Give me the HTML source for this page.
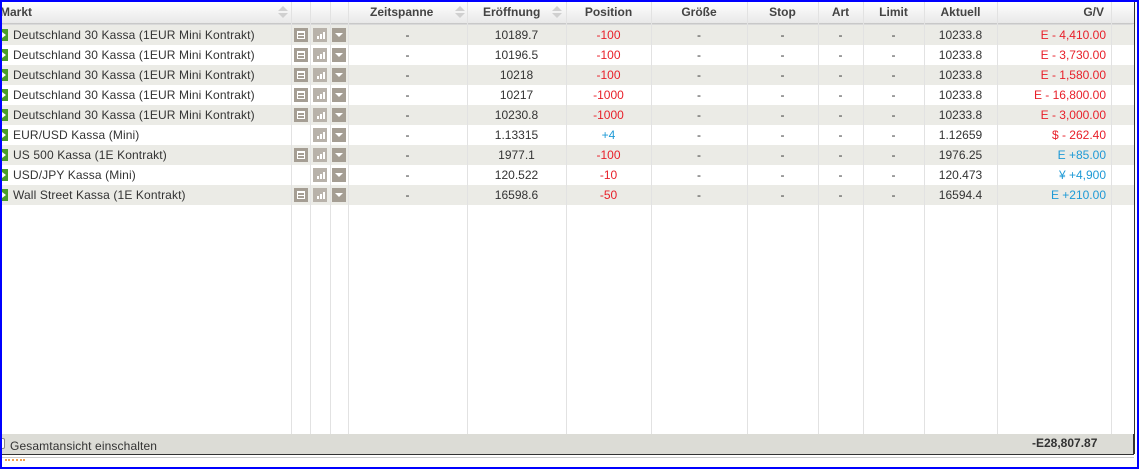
<!DOCTYPE html><html><head><meta charset="utf-8"><style>
*{margin:0;padding:0;box-sizing:border-box}
body{width:1139px;height:469px;overflow:hidden;background:#fff;font-family:"Liberation Sans",Arial,sans-serif;font-size:12px;color:#333;position:relative}
.frame{position:absolute;left:0;top:0;width:1139px;height:469px;border:2px solid #0000ff}
.hdr{position:absolute;left:0;top:2px;width:1134px;height:22px;background:linear-gradient(#fff,#e8e8e8);border-bottom:1px solid #c8c8c8;box-shadow:0 2px 3px rgba(0,0,0,.18)}
.vl{position:absolute;top:2px;height:432px;width:1px;background:#e2e2e2}
.row{position:absolute;left:0;width:1134px;height:20px}
.c{position:absolute;top:0;height:20px;line-height:20px;white-space:nowrap}
.h{position:absolute;top:2px;height:22px;line-height:20px;font-weight:bold;color:#444;white-space:nowrap}
.r{color:#e8202a}.b{color:#1e9ad6}
.flag{position:absolute;left:0;top:4px;width:8px;height:12px;background:#4a9e2a}
.flag:after{content:"";position:absolute;left:2px;top:3px;border-left:4px solid #fff;border-top:3px solid transparent;border-bottom:3px solid transparent}
.ic{position:absolute;top:3px;width:14px;height:14px;background:#a59e94}
.sort{position:absolute;top:6px;width:0;height:0}
.sort:before{content:"";position:absolute;left:0;top:0;border-left:5px solid transparent;border-right:5px solid transparent;border-bottom:5px solid #d0d0d0}
.sort:after{content:"";position:absolute;left:0;top:7px;border-left:5px solid transparent;border-right:5px solid transparent;border-top:5px solid #d0d0d0}
.m{letter-spacing:.12px}
</style></head><body>
<div class="hdr"></div>
<div class="h" style="left:0">Markt</div>
<div class="sort" style="left:278px"></div>
<div class="h" style="left:370px">Zeitspanne</div><div class="sort" style="left:455px"></div>
<div class="h" style="left:483px">Eröffnung</div><div class="sort" style="left:552px"></div>
<div class="h" style="left:566px;width:85px;text-align:center">Position</div>
<div class="h" style="left:651px;width:96px;text-align:center">Größe</div>
<div class="h" style="left:747px;width:71px;text-align:center">Stop</div>
<div class="h" style="left:818px;width:45px;text-align:center">Art</div>
<div class="h" style="left:863px;width:61px;text-align:center">Limit</div>
<div class="h" style="left:924px;width:73px;text-align:center">Aktuell</div>
<div class="h" style="left:997px;width:107px;text-align:right">G/V</div>
<div id="rows"></div>
<div class="vl" style="left:291px"></div><div class="vl" style="left:310px"></div><div class="vl" style="left:330px"></div><div class="vl" style="left:348px"></div><div class="vl" style="left:467px"></div><div class="vl" style="left:566px"></div><div class="vl" style="left:651px"></div><div class="vl" style="left:747px"></div><div class="vl" style="left:818px"></div><div class="vl" style="left:863px"></div><div class="vl" style="left:924px"></div><div class="vl" style="left:997px"></div><div class="vl" style="left:1111px"></div>
<div style="position:absolute;left:0;top:434px;width:1134px;height:21px;background:#dcdcd6;border-bottom:1px solid #333;border-right:1px solid #333"></div>
<div style="position:absolute;left:-6px;top:438px;width:11px;height:11px;border:1px solid #888;background:#fff;border-radius:2px"></div>
<div class="m" style="position:absolute;left:10px;top:435px;height:21px;line-height:23px;font-size:12px;color:#333">Gesamtansicht einschalten</div>
<div style="position:absolute;left:1032px;top:433px;height:21px;line-height:20px;font-weight:bold;color:#333">-E28,807.87</div>
<div style="position:absolute;left:1134px;top:2px;width:1px;height:452px;background:#333"></div>
<div style="position:absolute;left:0;top:457px;width:1134px;height:1px;background:#ccc"></div>
<div style="position:absolute;left:5px;top:459px;width:20px;height:3px;border-top:2px dotted #f0a050"></div>
<div class="frame"></div>
<script>
var d=[["Deutschland 30 Kassa (1EUR Mini Kontrakt)",1,"10189.7","-100","r","10233.8","E - 4,410.00","r"],
["Deutschland 30 Kassa (1EUR Mini Kontrakt)",1,"10196.5","-100","r","10233.8","E - 3,730.00","r"],
["Deutschland 30 Kassa (1EUR Mini Kontrakt)",1,"10218","-100","r","10233.8","E - 1,580.00","r"],
["Deutschland 30 Kassa (1EUR Mini Kontrakt)",1,"10217","-1000","r","10233.8","E - 16,800.00","r"],
["Deutschland 30 Kassa (1EUR Mini Kontrakt)",1,"10230.8","-1000","r","10233.8","E - 3,000.00","r"],
["EUR/USD Kassa (Mini)",0,"1.13315","+4","b","1.12659","$ - 262.40","r"],
["US 500 Kassa (1E Kontrakt)",1,"1977.1","-100","r","1976.25","E +85.00","b"],
["USD/JPY Kassa (Mini)",0,"120.522","-10","r","120.473","¥ +4,900","b"],
["Wall Street Kassa (1E Kontrakt)",1,"16598.6","-50","r","16594.4","E +210.00","b"]];
var h="";d.forEach(function(r,i){var t=25+i*20;
h+='<div class="row" style="top:'+t+'px;background:'+(i%2==0?'#ebebe6':'#fff')+'">'+
'<div class="flag"></div><div class="c m" style="left:13px">'+r[0]+'</div>'+
(r[1]?'<div class="ic" style="left:294px"><div style="position:absolute;left:3px;top:3px;width:8px;height:8px;border:1px solid #fff;background:linear-gradient(#fff 0 1px,transparent 1px 3px,#fff 3px 4px,transparent 4px)"></div></div>':'')+
'<div class="ic" style="left:313px;background:#b8b2aa"><div style="position:absolute;left:4px;bottom:3px;width:2px;height:3px;background:#fff"></div><div style="position:absolute;left:7px;bottom:3px;width:2px;height:5px;background:#fff"></div><div style="position:absolute;left:10px;bottom:3px;width:2px;height:7px;background:#fff"></div></div>'+
'<div class="ic" style="left:332px"><div style="position:absolute;left:3px;top:5px;border-left:4px solid transparent;border-right:4px solid transparent;border-top:4px solid #fff"></div></div>'+
'<div class="c" style="left:348px;width:119px;text-align:center">-</div>'+
'<div class="c" style="left:467px;width:99px;text-align:center">'+r[2]+'</div>'+
'<div class="c '+r[4]+'" style="left:566px;width:85px;text-align:center">'+r[3]+'</div>'+
'<div class="c" style="left:651px;width:96px;text-align:center">-</div>'+
'<div class="c" style="left:747px;width:71px;text-align:center">-</div>'+
'<div class="c" style="left:818px;width:45px;text-align:center">-</div>'+
'<div class="c" style="left:863px;width:61px;text-align:center">-</div>'+
'<div class="c" style="left:924px;width:73px;text-align:center">'+r[5]+'</div>'+
'<div class="c '+r[7]+'" style="left:997px;width:109px;text-align:right">'+r[6]+'</div></div>';});
document.getElementById("rows").innerHTML=h;
</script>
</body></html>
